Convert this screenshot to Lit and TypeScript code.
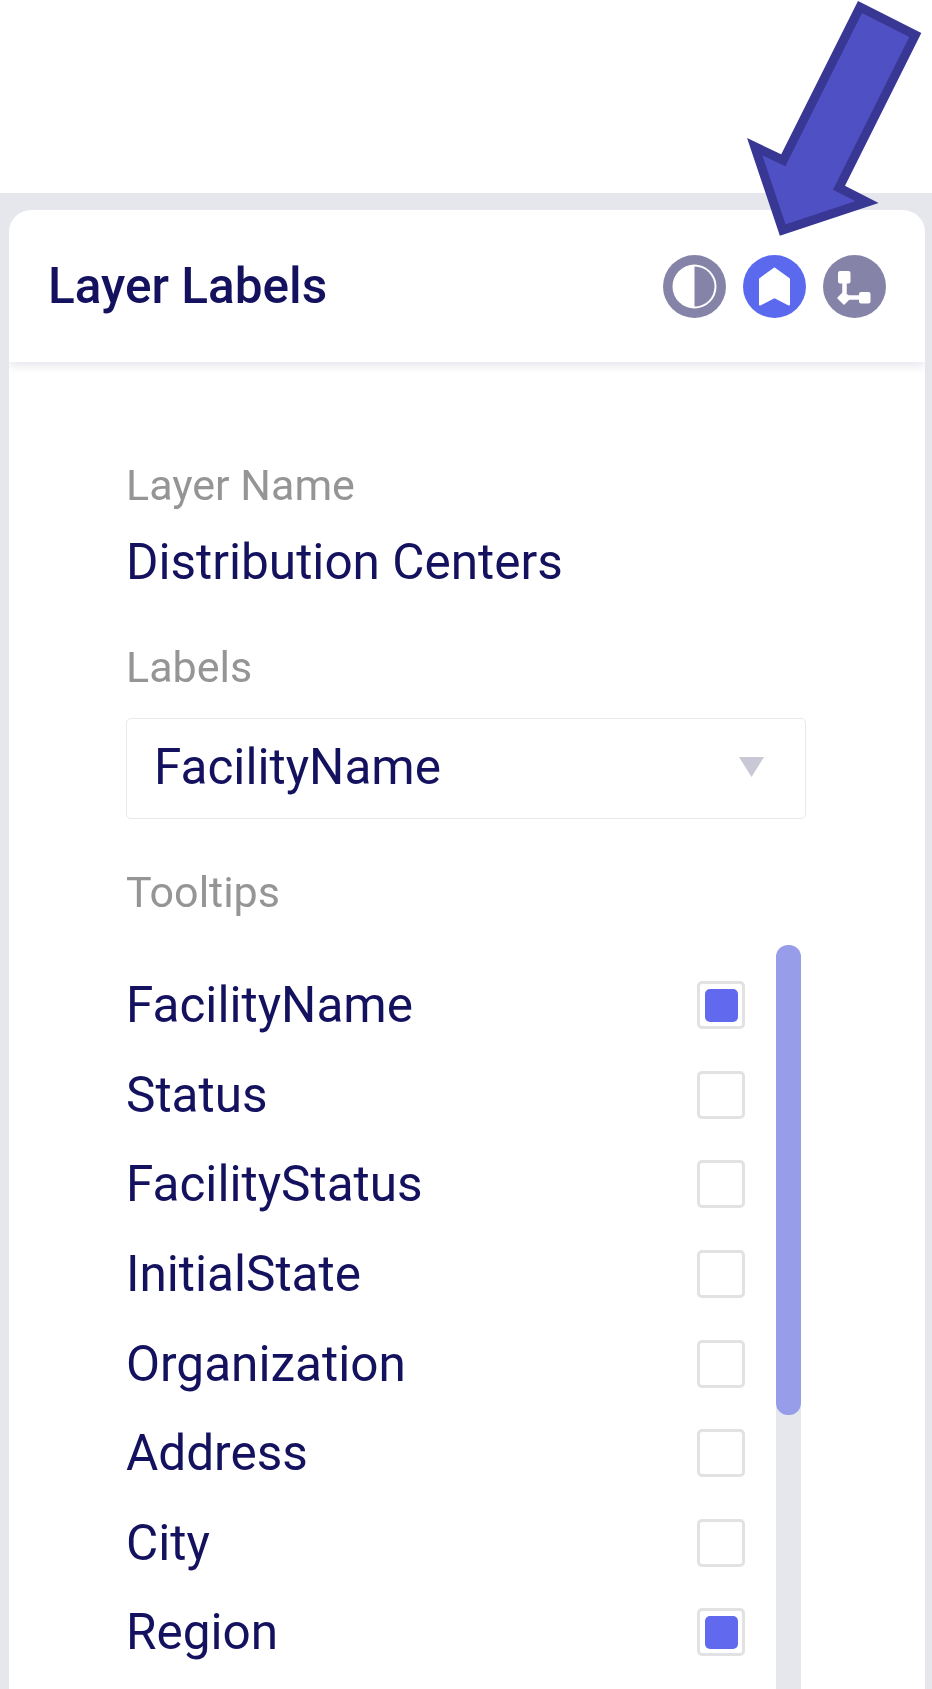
import { LitElement, html, css, svg } from "lit";
import { customElement } from "lit/decorators.js";

const ROWS: [string, boolean][] = [
  ["FacilityName", true],
  ["Status", false],
  ["FacilityStatus", false],
  ["InitialState", false],
  ["Organization", false],
  ["Address", false],
  ["City", false],
  ["Region", true],
];

@customElement("app-root")
export class AppRoot extends LitElement {
  static styles = css`
    :host {
      display: block;
      position: relative;
      width: 932px;
      height: 1689px;
      overflow: hidden;
      background: #fff;
      font-family: Roboto, "Liberation Sans", sans-serif;
      color: #14125f;
      filter: blur(0.5px);
    }
    .page {
      margin-top: 193px;
      height: 1496px;
      box-sizing: border-box;
      padding: 17px 7px 0 9px;
      background: #e5e7ec;
    }
    .card {
      height: 100%;
      background: #fff;
      border-radius: 22px 22px 0 0;
      display: flex;
      flex-direction: column;
      overflow: hidden;
    }
    .head {
      flex: none;
      height: 152px;
      box-sizing: border-box;
      padding: 2px 39px 0 39px;
      display: flex;
      align-items: center;
      justify-content: space-between;
      box-shadow: 0 3px 10px rgba(60, 60, 110, 0.14);
      position: relative;
    }
    h1 {
      margin: 0;
      font-size: 49.5px;
      font-weight: 500;
      line-height: 1;
    }
    .icons {
      display: flex;
      gap: 17px;
      margin-top: -2px;
    }
    .icons svg {
      display: block;
      width: 63px;
      height: 63px;
    }
    .body {
      flex: 1;
      min-height: 0;
      padding: 0 0 0 117px;
    }
    .label {
      font-size: 43px;
      line-height: 47px;
      color: #959595;
    }
    .label.first {
      margin-top: 100px;
    }
    .value {
      font-size: 49.5px;
      line-height: 53px;
      margin-top: 27px;
    }
    .label.second {
      margin-top: 55px;
    }
    .select {
      width: 680px;
      height: 101px;
      box-sizing: border-box;
      margin-top: 27px;
      padding: 0 41px 3px 27px;
      border: 1.5px solid #e8e8ec;
      border-radius: 5px;
      display: flex;
      align-items: center;
      justify-content: space-between;
      font-size: 49.5px;
    }
    .caret {
      width: 25px;
      height: 20px;
      background: #c9c9d6;
      clip-path: polygon(0 0, 100% 0, 50% 100%);
    }
    .label.third {
      margin-top: 49.5px;
    }
    .lists {
      margin-top: 28px;
      display: flex;
      height: 770px;
    }
    .rows {
      width: 619px;
      padding-top: 17px;
    }
    .row {
      height: 89.6px;
      display: flex;
      align-items: center;
      justify-content: space-between;
      font-size: 49.5px;
    }
    .box {
      width: 48px;
      height: 48px;
      box-sizing: border-box;
      border: 3px solid #e2e2e4;
      border-radius: 5px;
      display: flex;
      align-items: center;
      justify-content: center;
    }
    .box i {
      display: block;
      width: 33px;
      height: 33px;
      border-radius: 5px;
      background: #6169ef;
    }
    .track {
      margin: 1px 0 0 31px;
      width: 25px;
      border-radius: 12px 12px 0 0;
      background: #e5e7ec;
    }
    .thumb {
      height: 470px;
      border-radius: 12px;
      background: #979de9;
    }
    .arrow {
      position: absolute;
      left: 0;
      top: 0;
      width: 932px;
      height: 260px;
      pointer-events: none;
    }
  `;

  private half() {
    return html`<svg viewBox="0 0 63 63">
      <circle cx="31.5" cy="31.5" r="31.5" fill="#8583a8"></circle>
      <circle cx="31.5" cy="31.5" r="22" fill="#fff"></circle>
      <path d="M31.5 11.5a20 20 0 0 1 0 40z" fill="#8583a8"></path>
    </svg>`;
  }

  private mark() {
    return html`<svg viewBox="0 0 63 63">
      <circle cx="31.5" cy="31.5" r="31.5" fill="#5a69ee"></circle>
      <path
        d="M31.5 13.5L46 24V49.5L31.5 42L17 49.5V24Z"
        fill="#fff"
        stroke="#fff"
        stroke-width="2"
        stroke-linejoin="round"
      ></path>
    </svg>`;
  }

  private graph() {
    return html`<svg viewBox="0 0 63 63">
      <circle cx="31.5" cy="31.5" r="31.5" fill="#8583a8"></circle>
      <rect x="15" y="16" width="12.5" height="12.5" rx="2" fill="#fff"></rect>
      <rect x="36" y="37" width="11.5" height="11.5" rx="2" fill="#fff"></rect>
      <path
        d="M15 43L21 37L27 43L21 49Z"
        fill="#fff"
        stroke="#fff"
        stroke-width="1.5"
        stroke-linejoin="round"
      ></path>
      <path d="M21.5 27V38M21 42.5H37" fill="none" stroke="#fff" stroke-width="4.5"></path>
    </svg>`;
  }

  render() {
    return html`
      <div class="page">
        <div class="card">
          <header class="head">
            <h1>Layer Labels</h1>
            <div class="icons">${this.half()}${this.mark()}${this.graph()}</div>
          </header>
          <div class="body">
            <div class="label first">Layer Name</div>
            <div class="value">Distribution Centers</div>
            <div class="label second">Labels</div>
            <div class="select"><span>FacilityName</span><span class="caret"></span></div>
            <div class="label third">Tooltips</div>
            <div class="lists">
              <div class="rows">
                ${ROWS.map(
                  ([name, on]) => html`<div class="row">
                    <span>${name}</span>
                    <span class="box">${on ? html`<i></i>` : ""}</span>
                  </div>`
                )}
              </div>
              <div class="track"><div class="thumb"></div></div>
            </div>
          </div>
        </div>
      </div>
      <svg class="arrow" viewBox="0 0 932 260">
        ${svg`<path d="M860 7L915.3 35L839 187.7L867 202L782.7 230L754.7 146.7L783.3 160.3Z" fill="#4f50c4" stroke="#393794" stroke-width="9"></path>`}
      </svg>
    `;
  }
}
